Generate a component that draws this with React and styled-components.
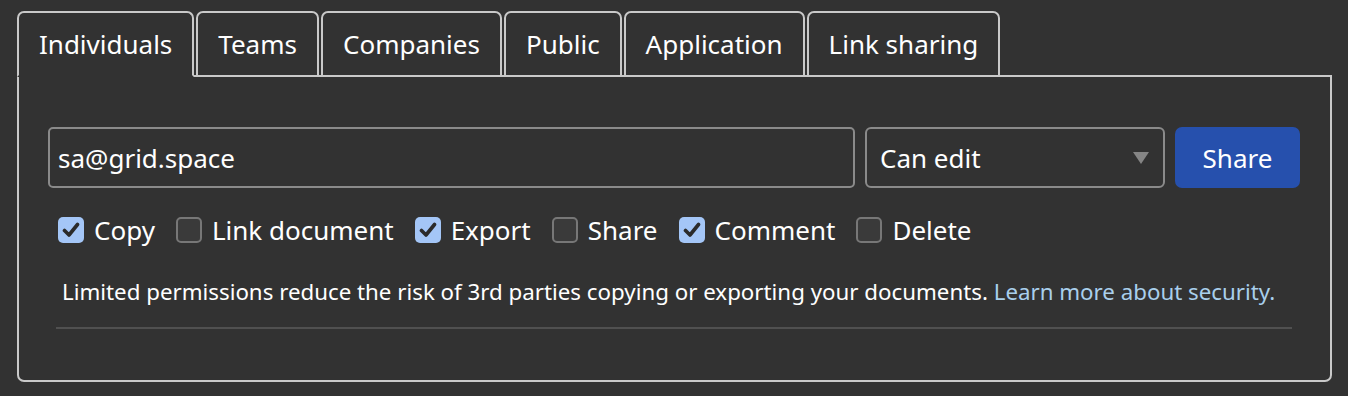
import React from "react";
import styled, { createGlobalStyle } from "styled-components";

const Global = createGlobalStyle`
  html, body { margin: 0; padding: 0; background: #323232; }
  body { font-family: "Noto Sans", "Open Sans", sans-serif; color: #fff; }
`;

const Page = styled.div`
  padding: 11px 16px 16px 17px;
  width: 1315px;
`;

const TabList = styled.div`
  display: flex;
  gap: 2px;
  position: relative;
  z-index: 1;
  margin-bottom: -2px;
`;

const Tab = styled.div`
  height: 62px;
  padding: 0 20px;
  display: flex;
  align-items: center;
  font-size: 26px;
  color: #fff;
  border: 2px solid #c9c9c9;
  border-bottom-color: ${(p) => (p.$active ? "#323232" : "#c9c9c9")};
  border-radius: 7px 7px 0 0;
  background: #323232;
`;

const Panel = styled.div`
  border: 2px solid #c9c9c9;
  border-radius: 0 0 7px 7px;
  padding: 50px 30px 51px 29px;
`;

const ShareRow = styled.div`
  display: flex;
  gap: 10px;
  height: 61px;
`;

const EmailInput = styled.div`
  flex: 1;
  border: 2px solid #8a8a8a;
  border-radius: 5px;
  display: flex;
  align-items: center;
  padding: 0 8px;
  font-size: 26px;
  color: #fff;
`;

const Select = styled.div`
  width: 300px;
  box-sizing: border-box;
  border: 2px solid #8a8a8a;
  border-radius: 6px;
  display: flex;
  align-items: center;
  justify-content: space-between;
  padding: 0 14px 0 13px;
  font-size: 26px;
`;

const Caret = styled.span`
  width: 0;
  height: 0;
  border-left: 8px solid transparent;
  border-right: 8px solid transparent;
  border-top: 12px solid #858585;
`;

const ShareButton = styled.button`
  width: 125px;
  border: none;
  border-radius: 7px;
  background: #2650ad;
  color: #fff;
  font-family: inherit;
  font-size: 26px;
  padding: 0;
`;

const Checks = styled.div`
  display: flex;
  align-items: center;
  gap: 21px;
  margin: 27px 0 0 10px;
`;

const CheckItem = styled.label`
  display: flex;
  align-items: center;
  gap: 10px;
  font-size: 26px;
  line-height: 30px;
`;

const Box = styled.span`
  width: 26px;
  height: 26px;
  box-sizing: border-box;
  border-radius: 5px;
  display: flex;
  align-items: center;
  justify-content: center;
  background: ${(p) => (p.$on ? "#a4c6f7" : "#3a3a3a")};
  border: ${(p) => (p.$on ? "none" : "2px solid #777")};
`;

const Notice = styled.div`
  margin: 0 8px;
  padding: 33px 6px 21px;
  border-bottom: 2px solid #505050;
  font-size: 22.3px;
  line-height: 28px;
  white-space: nowrap;
`;

const Link = styled.a`
  color: #a9cfec;
  text-decoration: none;
`;

const tabs = ["Individuals", "Teams", "Companies", "Public", "Application", "Link sharing"];
const perms = [
  ["Copy", true],
  ["Link document", false],
  ["Export", true],
  ["Share", false],
  ["Comment", true],
  ["Delete", false],
];

const Check = () => (
  <svg width="18" height="16" viewBox="0 0 18 16">
    <path d="M2.5 8.5 L7 13 L15.5 2.5" fill="none" stroke="#2b2b2b" strokeWidth="3.6" strokeLinecap="round" strokeLinejoin="round" />
  </svg>
);

export default function App() {
  return (
    <Page>
      <Global />
      <TabList>
        {tabs.map((t, i) => (
          <Tab key={t} $active={i === 0}>
            {t}
          </Tab>
        ))}
      </TabList>
      <Panel>
        <ShareRow>
          <EmailInput>sa@grid.space</EmailInput>
          <Select>
            Can edit
            <Caret />
          </Select>
          <ShareButton>Share</ShareButton>
        </ShareRow>
        <Checks>
          {perms.map(([label, on]) => (
            <CheckItem key={label}>
              <Box $on={on}>{on && <Check />}</Box>
              {label}
            </CheckItem>
          ))}
        </Checks>
        <Notice>
          Limited permissions reduce the risk of 3rd parties copying or exporting your documents.{" "}
          <Link href="#">Learn more about security.</Link>
        </Notice>
      </Panel>
    </Page>
  );
}
